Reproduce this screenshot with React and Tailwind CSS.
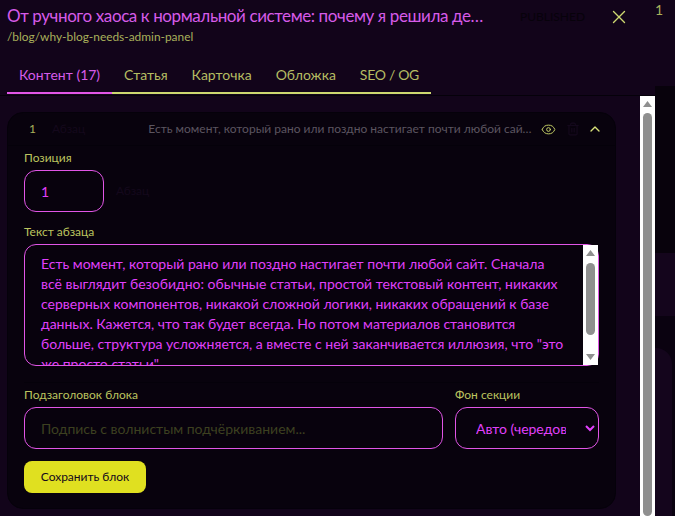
import React from 'react';
import { X, Eye, Trash2, ChevronUp } from 'lucide-react';

const font = { fontFamily: 'Lato, "Noto Sans", sans-serif' };

const tabs = ['Статья', 'Карточка', 'Обложка'];

const paragraph =
  'Есть момент, который рано или поздно настигает почти любой сайт. Сначала всё выглядит безобидно: обычные статьи, простой текстовый контент, никаких серверных компонентов, никакой сложной логики, никаких обращений к базе данных. Кажется, что так будет всегда. Но потом материалов становится больше, структура усложняется, а вместе с ней заканчивается иллюзия, что "это же просто статьи".';

function Arrow({ up }) {
  return (
    <svg width="9" height="6" viewBox="0 0 9 6" className="shrink-0 fill-[#8f8f8f]">
      <path d={up ? 'M4.5 0 L9 6 L0 6 Z' : 'M0 0 L9 0 L4.5 6 Z'} />
    </svg>
  );
}

export default function App() {
  return (
    <div style={font} className="flex h-[516px] w-[675px] overflow-hidden bg-[#12041a]">
      <div className="flex h-full w-[655px] shrink-0 flex-col">
        <div className="relative h-[96px] shrink-0 border-b border-[#05010a] pl-[7px]">
          <h2 className="w-[480px] truncate pt-[4px] text-[17px] leading-[24px] tracking-[-0.4px] text-[#d65be8]">
            От ручного хаоса к нормальной системе: почему я решила делать админку
          </h2>
          <p className="mt-[1px] text-[11.9px] leading-[16px] text-[#a9b05a]">/blog/why-blog-needs-admin-panel</p>
          <span className="absolute left-[520px] top-[9px] text-[12px] leading-[16px] text-[#07020b]">PUBLISHED</span>
          <X className="absolute left-[608px] top-[6px] text-[#cdd870]" size={22} strokeWidth={1.5} />
          <div className="absolute bottom-0 left-[7px] flex h-[36px] items-start text-[14px] leading-[20px]">
            <span className="h-[35px] border-b-2 border-[#e155e6] px-3 pt-[6px] text-[#d65be8]">Контент (17)</span>
            {tabs.map((tab) => (
              <span key={tab} className="h-[35px] border-b-2 border-[#cdd870] px-3 pt-[6px] text-[#b5bc62]">
                {tab}
              </span>
            ))}
            <span className="h-[35px] border-b-2 border-[#cdd870] px-3 pt-[6px] tracking-[-0.3px] text-[#b5bc62]">
              SEO / OG
            </span>
          </div>
        </div>

        <div className="flex min-h-0 flex-1">
          <div className="w-[640px] shrink-0 pl-[7px] pt-[16px]">
            <div className="h-[397px] w-[609px] rounded-2xl border border-[#05010a] bg-[#08020d]">
              <div className="flex h-[33px] items-center border-b border-[#05010a] pl-[21px] text-[12px]">
                <span className="w-[23px] text-[#a9b05a]">1</span>
                <span className="text-[#14081c]">Абзац</span>
                <span className="ml-[63px] w-[386px] truncate text-[#5c5560]">
                  Есть момент, который рано или поздно настигает почти любой сайт. Сначала
                </span>
                <Eye className="ml-[7px] text-[#c4ce66]" size={15} strokeWidth={1.6} />
                <Trash2 className="ml-[10px] text-[#14081c]" size={14} />
                <ChevronUp className="ml-[7px] text-[#d8e27a]" size={16} />
              </div>

              <div className="px-[16px]">
                <label className="mt-[4px] block text-[12px] leading-[16px] text-[#bcc45f]">Позиция</label>
                <div className="mt-[4px] flex items-center">
                  <div className="flex h-[42px] w-[80px] items-center rounded-xl border border-[#e155e6] pl-[16px] text-[14px] text-[#e040fb]">
                    1
                  </div>
                  <span className="ml-[12px] text-[12px] text-[#14081c]">Абзац</span>
                </div>

                <label className="mt-[12px] block text-[12px] leading-[16px] text-[#bcc45f]">Текст абзаца</label>
                <div className="relative mt-[4px] h-[122px] w-[575px]">
                  <textarea
                    readOnly
                    value={paragraph}
                    className="h-full w-full resize-none overflow-hidden rounded-xl border border-[#e155e6] bg-transparent py-[9px] pl-[16px] pr-[32px] text-[14px] leading-[20px] text-[#e040fb] outline-none"
                  />
                  <div className="absolute bottom-[1px] right-[1px] top-[1px] flex w-[15px] flex-col items-center bg-white py-[5px]">
                    <Arrow up />
                    <div className="mt-[7px] h-[72px] w-[9px] rounded-full bg-[#8f8f8f]" />
                    <div className="flex-1" />
                    <Arrow />
                  </div>
                </div>

                <div className="mt-[16px] border-t border-[#05010a] pt-[4px]">
                  <div className="flex gap-[12px]">
                    <div className="w-[419px]">
                      <label className="block text-[12px] leading-[16px] text-[#bcc45f]">Подзаголовок блока</label>
                      <input
                        readOnly
                        placeholder="Подпись с волнистым подчёркиванием..."
                        className="mt-[4px] h-[42px] w-full rounded-xl border border-[#e155e6] bg-transparent px-[16px] text-[14px] outline-none placeholder:text-[#3d4020]"
                      />
                    </div>
                    <div className="w-[144px]">
                      <label className="block text-[12px] leading-[16px] text-[#bcc45f]">Фон секции</label>
                      <select className="mt-[4px] h-[42px] w-full rounded-xl border border-[#e155e6] bg-transparent px-[16px] text-[14px] text-[#e040fb] outline-none">
                        <option>Авто (чередование)</option>
                      </select>
                    </div>
                  </div>
                  <button className="mt-[12px] h-[32px] w-[122px] rounded-lg bg-[#e0e020] text-[12px] text-[#14081c]">
                    Сохранить блок
                  </button>
                </div>
              </div>
            </div>
          </div>

          <div className="flex w-[15px] shrink-0 flex-col items-center bg-white pt-[5px]">
            <Arrow up />
            <div className="mt-[6px] h-[420px] w-[9px] rounded-full bg-[#8f8f8f]" />
          </div>
        </div>
      </div>

      {/* page behind the modal */}
      <div className="flex h-full w-[20px] shrink-0 flex-col">
        <div className="h-[86px] shrink-0 text-[14px] leading-[20px] text-[#a9b05a]">1</div>
        <div className="h-[167px] shrink-0 bg-[#08020c]" />
        <div className="h-[63px] shrink-0 bg-[#14051c]" />
        <div className="flex-1 bg-[#0a0210] pt-[32px]">
          <div className="h-full w-[17px] rounded-tr-[16px] bg-[#14051c]" />
        </div>
      </div>
    </div>
  );
}
